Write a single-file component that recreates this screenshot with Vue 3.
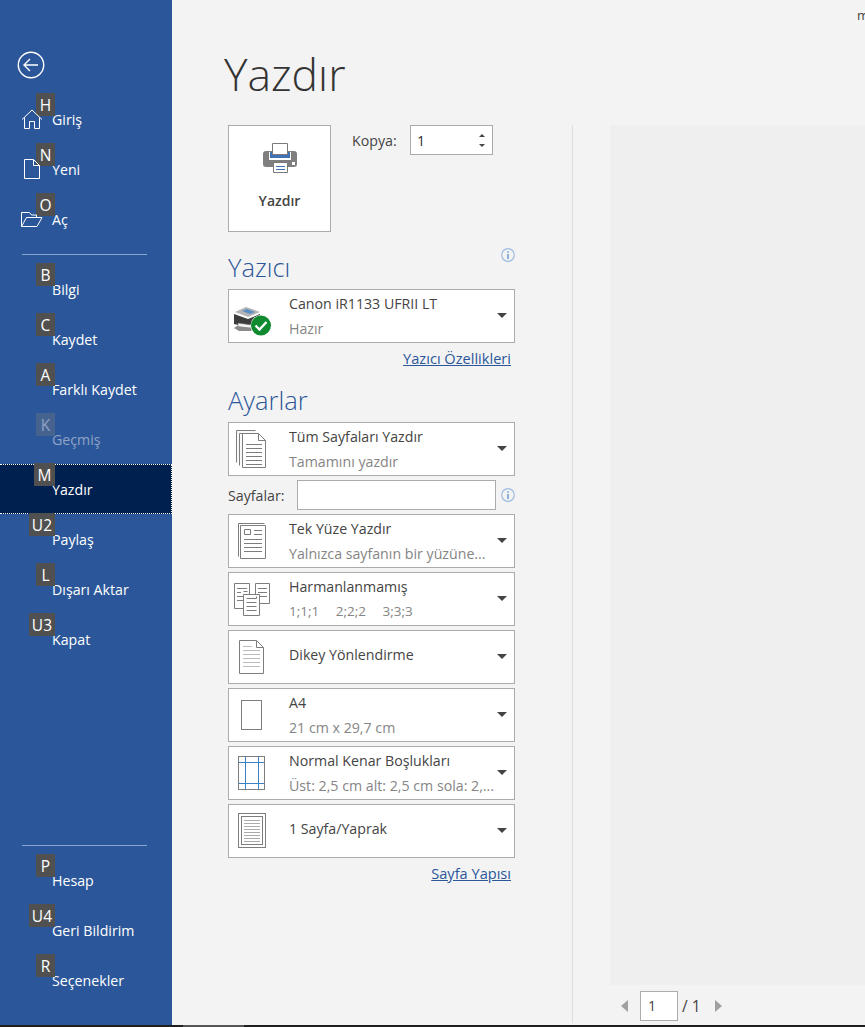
<template>
  <div class="backstage">
    <nav class="sidebar">
      <div class="back">
        <svg width="28" height="28" viewBox="0 0 28 28" fill="none" stroke="#fff">
          <circle cx="14" cy="14" r="12.7" stroke-width="1.4" />
          <path d="M7.5 14H21M13 8l-6 6 6 6" stroke-width="1.4" />
        </svg>
      </div>

      <div v-for="item in topItems" :key="item.label" class="nav-row">
        <span class="key-tip">{{ item.key }}</span>
        <svg v-if="item.icon === 'home'" class="nav-icon" width="22" height="22" viewBox="0 0 22 22" fill="none" stroke="#fff">
          <path d="M1 11.5 11 2l10 9.5M3.5 9.5v11h5v-7h5v7h5v-11" />
        </svg>
        <svg v-if="item.icon === 'new'" class="nav-icon" width="22" height="22" viewBox="0 0 22 22" fill="none" stroke="#fff">
          <path d="M3.5 1.5h9l6 6v13h-15zM12.5 1.5v6h6" />
        </svg>
        <svg v-if="item.icon === 'open'" class="nav-icon" width="22" height="22" viewBox="0 0 22 22" fill="none" stroke="#fff">
          <path d="M.5 18.5V4.500h8l2 2.500h5v2.500M.5 18.500h15.500l5-9H5.500z" />
        </svg>
        <span class="nav-label">{{ item.label }}</span>
      </div>

      <div class="nav-line first-line"></div>

      <div
        v-for="item in midItems"
        :key="item.label"
        class="nav-row"
        :class="{ active: item.active, disabled: item.disabled }"
      >
        <span class="key-tip">{{ item.key }}</span>
        <span class="nav-label">{{ item.label }}</span>
      </div>

      <div class="nav-spacer"></div>
      <div class="nav-line last-line"></div>

      <div v-for="item in bottomItems" :key="item.label" class="nav-row">
        <span class="key-tip">{{ item.key }}</span>
        <span class="nav-label">{{ item.label }}</span>
      </div>
    </nav>

    <main class="main">
      <span class="corner-text">m</span>
      <h1 class="page-title">Yazdır</h1>

      <div class="print-area">
        <section class="settings">
          <div class="print-top">
            <button class="print-button" type="button">
              <svg width="34" height="30" viewBox="0 0 34 30">
                <rect x="0" y="8" width="34" height="16" rx="3" fill="#7f7f7f" />
                <path d="M6 9h22v8H6z" fill="#fff" />
                <path d="M7 9h20v6H7z" fill="#3f73b5" />
                <path d="M9.500.5h15v11h-15z" fill="#fff" stroke="#7a7a7a" />
                <path d="M10.500 19.500h14v10h-14z" fill="#fff" stroke="#7a7a7a" />
                <path d="M13 23.500h9M13 26.500h9" stroke="#3f73b5" />
                <rect x="29" y="19" width="3" height="3" fill="#fff" />
              </svg>
              <span>Yazdır</span>
            </button>
            <label class="copies">
              <span class="copies-label">Kopya:</span>
              <span class="copies-input">
                <span class="input-value">1</span>
                <span class="spin">
                  <i class="spin-up"></i>
                  <i class="spin-down"></i>
                </span>
              </span>
            </label>
          </div>

          <div class="heading-row">
            <h2>Yazıcı</h2>
            <svg class="info" width="14" height="14" viewBox="0 0 14 14" fill="none">
              <circle cx="7" cy="7" r="6.300" stroke="#9dbbe0" stroke-width="1.200" />
              <path d="M7 6v5M7 3.200v1.500" stroke="#5f93cf" stroke-width="1.400" />
            </svg>
          </div>

          <div class="select-box">
            <svg class="select-icon" width="48" height="52" viewBox="0 0 48 52">
              <path d="M6 22l11-5 14 5-12 5z" fill="#b5b5b5" />
              <path d="M13 21l5-2 8 3-5 2z" fill="#5b8ec7" />
              <path d="M5 24l14 5 12-5v9l-12 4-14-3z" fill="#3c3c3c" />
              <path d="M9 33l14 2v3l-14-1z" fill="#f4f4f4" stroke="#666" stroke-width=".6" />
              <path d="M5 38l5 3h12l3-2-4-1-13-2z" fill="#8a8a8a" />
              <circle cx="32" cy="35.500" r="10.500" fill="#fff" />
              <circle cx="32" cy="35.500" r="10" fill="#0f8a2f" />
              <path d="M26.500 35.500l4 4 7-7.500" fill="none" stroke="#fff" stroke-width="2.400" />
            </svg>
            <div class="select-text">
              <div class="select-title">Canon iR1133 UFRII LT</div>
              <div class="select-sub">Hazır</div>
            </div>
            <i class="select-arrow"></i>
          </div>
          <a class="link-row">Yazıcı Özellikleri</a>

          <div class="heading-row settings-heading">
            <h2>Ayarlar</h2>
          </div>

          <div class="select-list">
            <template v-for="opt in options" :key="opt.title">
              <div v-if="opt.pagesInput" class="pages-row">
                <span>Sayfalar:</span>
                <span class="pages-input"></span>
                <svg class="info" width="14" height="14" viewBox="0 0 14 14" fill="none">
                  <circle cx="7" cy="7" r="6.300" stroke="#9dbbe0" stroke-width="1.200" />
                  <path d="M7 6v5M7 3.200v1.500" stroke="#5f93cf" stroke-width="1.400" />
                </svg>
              </div>
              <div v-else class="select-box">
                <svg class="select-icon" width="48" height="52" viewBox="0 0 48 52" fill="none" stroke="#7d7d7d">
                  <g v-if="opt.icon === 'all'">
                    <path d="M7.500 39.500v-32h19M10.500 42.500v-32h19" fill="#f8f8f8" />
                    <path d="M13.500 44.500v-34h16l7 7v27z" fill="#fff" />
                    <path d="M29.500 10.500v7h7M17 21.500h16M17 25.500h16M17 29.500h16M17 33.500h16M17 37.500h16M17 41.500h16" />
                  </g>
                  <g v-if="opt.icon === 'single'">
                    <path d="M9.500 41.500v-33h26" />
                    <path d="M11.500 43.500v-33h25v33z" fill="#fff" />
                    <path d="M15.500 14.500h6v5h-6zM25 15.500h8M25 19.500h8M15 24.500h18M15 28.500h18M15 32.500h18M15 36.500h18" />
                  </g>
                  <g v-if="opt.icon === 'collate'">
                    <path d="M5.500 10.500h15v25h-15zM26.500 10.500h14v20h-14z" fill="#fff" />
                    <path d="M8 15.500h10M8 19.500h4M14.500 18.500h4M8 23.500h10M8 27.500h10M29 15.500h9M29 19.500h9M29 23.500h9" />
                    <path d="M14.500 21.500h16v21h-16z" fill="#fff" />
                    <path d="M17.500 25.500h10v-2M17.500 29.500h10M17.500 33.500h10M17.500 37.500h10" />
                  </g>
                  <g v-if="opt.icon === 'portrait'">
                    <path d="M10.500 9.500h17l7 7v26h-24zM27.500 9.500v7h7" fill="#fff" />
                    <path d="M14 15.500h9M14 19.500h17M14 23.500h17M14 27.500h17M14 31.500h17M14 35.500h17" stroke="#bbb" />
                  </g>
                  <rect v-if="opt.icon === 'paper'" x="12.500" y="11.500" width="20" height="29" fill="#fff" />
                  <g v-if="opt.icon === 'margins'">
                    <rect x="9.500" y="9.500" width="26" height="33" fill="#fff" />
                    <path d="M16.500 9.500v33M29.500 9.500v33M9.500 15.500h26M9.500 36.500h26" stroke="#3f7fc4" />
                  </g>
                  <g v-if="opt.icon === 'sheet'">
                    <rect x="9.500" y="8.500" width="27" height="34" fill="#fff" />
                    <rect x="12.500" y="11.500" width="21" height="28" />
                    <path d="M15 15.500h16M15 18.500h16M15 21.500h16M15 24.500h16M15 27.500h16M15 30.500h16M15 33.500h16M15 36.500h16" stroke="#aaa" />
                  </g>
                </svg>
                <div class="select-text" :class="{ single: !opt.sub }">
                  <div class="select-title">{{ opt.title }}</div>
                  <div v-if="opt.sub" class="select-sub" :class="{ spaced: opt.icon === 'collate' }">{{ opt.sub }}</div>
                </div>
                <i class="select-arrow"></i>
              </div>
            </template>
          </div>
          <a class="link-row">Sayfa Yapısı</a>
        </section>

        <section class="preview-col">
          <div class="preview"></div>
          <div class="pager">
            <i class="pager-prev"></i>
            <span class="pager-input">1</span>
            <span class="pager-total">/ 1</span>
            <i class="pager-next"></i>
          </div>
        </section>
      </div>
    </main>
  </div>
  <div class="window-edge">
    <span class="edge-segment"></span>
  </div>
</template>

<script setup>
const topItems = [
  { key: "H", label: "Giriş", icon: "home" },
  { key: "N", label: "Yeni", icon: "new" },
  { key: "O", label: "Aç", icon: "open" },
];

const midItems = [
  { key: "B", label: "Bilgi" },
  { key: "C", label: "Kaydet" },
  { key: "A", label: "Farklı Kaydet" },
  { key: "K", label: "Geçmiş", disabled: true },
  { key: "M", label: "Yazdır", active: true },
  { key: "U2", label: "Paylaş" },
  { key: "L", label: "Dışarı Aktar" },
  { key: "U3", label: "Kapat" },
];

const bottomItems = [
  { key: "P", label: "Hesap" },
  { key: "U4", label: "Geri Bildirim" },
  { key: "R", label: "Seçenekler" },
];

const options = [
  { title: "Tüm Sayfaları Yazdır", sub: "Tamamını yazdır", icon: "all" },
  { title: "pages", pagesInput: true },
  { title: "Tek Yüze Yazdır", sub: "Yalnızca sayfanın bir yüzüne...", icon: "single" },
  { title: "Harmanlanmamış", sub: "1;1;1 2;2;2 3;3;3", icon: "collate" },
  { title: "Dikey Yönlendirme", icon: "portrait" },
  { title: "A4", sub: "21 cm x 29,7 cm", icon: "paper" },
  { title: "Normal Kenar Boşlukları", sub: "Üst: 2,5 cm alt: 2,5 cm sola: 2,...", icon: "margins" },
  { title: "1 Sayfa/Yaprak", icon: "sheet" },
];
</script>

<style>
html,
body {
  margin: 0;
  height: 100%;
  overflow: hidden;
  background: #1f1f1f;
}
</style>

<style scoped>
.backstage {
  display: flex;
  height: 1025px;
  font-family: "Open Sans", "Noto Sans", sans-serif;
  font-size: 14.2px;
  color: #444;
  background: #f3f3f3;
}

.window-edge {
  height: 2px;
  padding-left: 183px;
  background: #1f1f1f;
}

.edge-segment {
  display: block;
  width: 61px;
  height: 2px;
  background: #555;
}

.sidebar {
  width: 172px;
  flex: none;
  display: flex;
  flex-direction: column;
  color: #fff;
  background: #2b579a;
  padding-top: 51px;
  box-sizing: border-box;
  padding-bottom: 20px;
}

.back {
  height: 28px;
  padding-left: 17px;
  margin-bottom: 15px;
}

.nav-row {
  position: relative;
  height: 50px;
  flex: none;
  display: flex;
  align-items: center;
  padding-left: 52px;
  box-sizing: border-box;
}

.nav-row.disabled {
  color: #8fa3c6;
}

.nav-row.active {
  background: #002050;
  border-top: 1px dotted #fff;
  border-bottom: 1px dotted #fff;
  border-right: 1px dotted #fff;
}

.nav-icon {
  position: absolute;
  left: 21px;
  top: 14px;
}

.key-tip {
  position: absolute;
  right: 117px;
  top: -1px;
  min-width: 19px;
  height: 23px;
  padding: 0 3px;
  box-sizing: border-box;
  display: flex;
  align-items: center;
  justify-content: center;
  color: #fff;
  background: #505050;
  font-size: 15.5px;
}

.active .key-tip {
  min-width: 21px;
  right: 116px;
  top: -2px;
}

.disabled .key-tip {
  color: #8fa3c6;
  background: #46628f;
}

.nav-line {
  height: 1px;
  flex: none;
  margin: 0 25px 0 22px;
  background: #8ba6cc;
}

.first-line {
  margin-top: 10px;
  margin-bottom: 9px;
}

.nav-spacer {
  flex: 1;
}

.last-line {
  margin-bottom: 9px;
}

.main {
  position: relative;
  flex: 1;
  min-width: 0;
  display: flex;
  flex-direction: column;
  overflow: hidden;
}

.corner-text {
  position: absolute;
  left: 685px;
  top: 6px;
  font-size: 13px;
}

.page-title {
  margin: 42px 0 0 52px;
  height: 83px;
  font-size: 44.5px;
  line-height: 64px;
  font-weight: 300;
  color: #333;
}

.print-area {
  flex: 1;
  min-height: 0;
  display: flex;
}

.settings {
  width: 287px;
  flex: none;
  margin-left: 56px;
}

.print-top {
  display: flex;
  align-items: flex-start;
}

.print-button {
  width: 103px;
  height: 107px;
  padding: 17px 0 0;
  display: flex;
  flex-direction: column;
  align-items: center;
  gap: 18px;
  border: 1px solid #ababab;
  background: #fff;
  color: #444;
  font-family: inherit;
  font-size: 14px;
  font-weight: 600;
}

.copies {
  margin-left: 21px;
  display: flex;
  align-items: center;
}

.copies-label {
  width: 58px;
}

.copies-input {
  width: 83px;
  height: 30px;
  box-sizing: border-box;
  padding-left: 6px;
  display: flex;
  align-items: center;
  justify-content: space-between;
  border: 1px solid #ababab;
  background: #fff;
}

.input-value {
  color: #333;
}

.spin {
  width: 20px;
  display: flex;
  flex-direction: column;
  align-items: center;
  gap: 7px;
}

.spin-up,
.spin-down {
  width: 0;
  height: 0;
  border-left: 3px solid transparent;
  border-right: 3px solid transparent;
}

.spin-up {
  border-bottom: 3px solid #444;
}

.spin-down {
  border-top: 3px solid #444;
}

.heading-row {
  position: relative;
  display: flex;
  justify-content: space-between;
  margin-top: 16px;
  padding-top: 3px;
  margin-bottom: 4px;
}

.heading-row h2 {
  margin: 0;
  height: 34px;
  line-height: 33px;
  font-size: 25.5px;
  font-weight: 300;
  color: #2b579a;
}

.heading-row .info {
  margin-top: -3px;
}

.settings-heading {
  margin-top: 14px;
  padding-top: 0;
  margin-bottom: 5px;
}

.settings-heading h2 {
  line-height: 35px;
}

.select-box {
  position: relative;
  height: 54px;
  box-sizing: border-box;
  display: flex;
  align-items: center;
  border: 1px solid #ababab;
  background: #fff;
}

.select-icon {
  position: absolute;
  left: 0;
  top: 0;
}

.select-text {
  margin-left: 60px;
  min-width: 0;
  display: flex;
  flex-direction: column;
  gap: 6px;
  white-space: nowrap;
}

.select-text.single {
  padding-bottom: 6px;
}

.select-title,
.select-sub {
  line-height: 19px;
}

.select-sub {
  color: #858585;
}

.select-sub.spaced {
  font-size: 13.5px;
  word-spacing: 13px;
}

.select-arrow {
  position: absolute;
  right: 7px;
  top: 23px;
  width: 0;
  height: 0;
  border-left: 5px solid transparent;
  border-right: 5px solid transparent;
  border-top: 5px solid #444;
}

.link-row {
  display: block;
  height: 22px;
  margin-top: 4px;
  padding-right: 4px;
  font-size: 14.6px;
  line-height: 22px;
  text-align: right;
  color: #2b579a;
  text-decoration: underline;
}

.select-list {
  display: flex;
  flex-direction: column;
  gap: 4px;
}

.pages-row {
  height: 30px;
  display: flex;
  align-items: center;
}

.pages-row span:first-child {
  width: 69px;
}

.pages-input {
  width: 199px;
  height: 30px;
  box-sizing: border-box;
  border: 1px solid #ababab;
  background: #fff;
}

.pages-row .info {
  margin-left: 5px;
}

.preview-col {
  flex: 1;
  min-width: 0;
  margin-left: 57px;
  padding-left: 37px;
  border-left: 1px solid #dedede;
  display: flex;
  flex-direction: column;
  margin-bottom: 2px;
}

.preview {
  flex: 1;
  margin-bottom: 6px;
  background: #efefef;
}

.pager {
  height: 30px;
  margin-bottom: 2px;
  display: flex;
  align-items: center;
  padding-left: 11px;
}

.pager-prev,
.pager-next {
  width: 0;
  height: 0;
  border-top: 6px solid transparent;
  border-bottom: 6px solid transparent;
}

.pager-prev {
  border-right: 7px solid #a0a0a0;
}

.pager-next {
  margin-left: 14px;
  border-left: 7px solid #a0a0a0;
}

.pager-input {
  width: 38px;
  height: 30px;
  margin-left: 12px;
  box-sizing: border-box;
  padding-left: 7px;
  line-height: 28px;
  border: 1px solid #ababab;
  background: #fff;
}

.pager-total {
  margin-left: 4px;
  font-size: 15.5px;
}
</style>
